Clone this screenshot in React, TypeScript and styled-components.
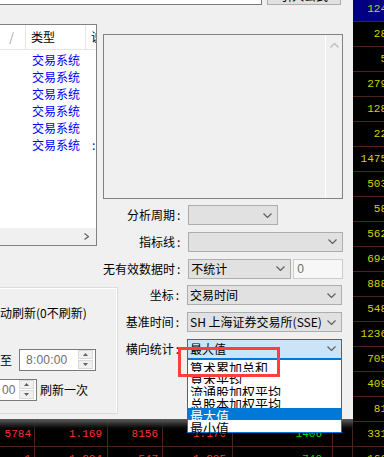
import styled, { createGlobalStyle } from 'styled-components';

const GlobalStyle = createGlobalStyle`
  * { box-sizing: border-box; }
  html, body { margin: 0; padding: 0; background: #000; overflow: hidden; }
  body { width: 384px; height: 457px; font-family: "Noto Sans CJK SC", sans-serif; }
`;

const Screen = styled.div`
  position: relative;
  width: 384px;
  height: 457px;
  overflow: hidden;
  background: #000;
`;

// quote table behind the dialog
const Quotes = styled.div`
  margin-top: -3px;
  width: 388px;
  font-family: "Liberation Mono", monospace;
  font-size: 11px;
`;

const QuoteRow = styled.div<{ $active?: boolean }>`
  display: grid;
  grid-template-columns: 35px 73px 55px 70px 100px 20px 35px;
  height: 25px;
  border-bottom: 1px solid #4a2418;
  background: ${p => (p.$active ? '#000080' : '#000')};
`;

const QuoteCell = styled.div<{ $color: string; $pad: number }>`
  color: ${p => p.$color};
  text-align: right;
  padding-right: ${p => p.$pad}px;
  line-height: 24px;
  border-right: 1px solid #4a2418;
  white-space: nowrap;
  overflow: hidden;
`;

const Dialog = styled.div`
  position: absolute;
  left: 0;
  top: 0;
  width: 353px;
  height: 419px;
  background: #f0f0f0;
  padding-right: 11px;
  display: flex;
  flex-direction: column;
  font-family: "Noto Sans CJK SC", sans-serif;
  font-size: 12px;
  color: #000;

  &::after {
    content: '';
    position: absolute;
    left: 0;
    right: 0;
    top: 100%;
    height: 12px;
    background: linear-gradient(#5c5c5c, rgba(20, 20, 20, 0.6) 70%, rgba(0, 0, 0, 0));
  }
`;

const TopRow = styled.div`
  display: flex;
  gap: 5px;
  margin-top: -18px;
  height: 23px;
  flex-shrink: 0;
`;

const PathField = styled.div`
  width: 262px;
  background: #fff;
  border: 1px solid #7a7a7a;
  border-left: none;
`;

const TopButton = styled.div`
  width: 74px;
  background: #e1e1e1;
  border: 1px solid #adadad;
  text-align: center;
  padding-top: 6px;
  line-height: 14px;
  overflow: hidden;
`;

const SectionA = styled.div`
  display: flex;
  gap: 6px;
  margin-top: 19px;
  align-items: flex-start;
`;

const SectionB = styled.div`
  display: flex;
  margin-top: 6.8px;
  align-items: flex-start;
`;

const ListView = styled.div`
  width: 97px;
  height: 222px;
  flex-shrink: 0;
  border: 1px solid #828282;
  border-left: none;
  background: #fff;
  display: flex;
  flex-direction: column;
  overflow: hidden;
`;

const ListHeader = styled.div`
  display: grid;
  grid-template-columns: 26px 60px 40px;
  height: 25px;
  flex-shrink: 0;
  border-bottom: 1px solid #e5e5e5;
`;

const HeadCell = styled.div<{ $muted?: boolean; $right?: boolean }>`
  line-height: 24px;
  border-right: 1px solid #e5e5e5;
  padding: ${p => (p.$right ? '0 11px 0 0' : '0 0 0 5px')};
  text-align: ${p => (p.$right ? 'right' : 'left')};
  color: ${p => (p.$muted ? '#a0a0a0' : '#000')};
  white-space: nowrap;
  overflow: hidden;
`;

const ListBody = styled.div`
  flex: 1;
  padding-top: 1px;
`;

const ListRow = styled.div`
  display: grid;
  grid-template-columns: 26px 60px 40px;
  height: 17px;
  line-height: 17px;
  color: #0000ff;
  white-space: nowrap;
`;

const ListText = styled.span`
  padding-left: 6px;
  overflow: hidden;
`;

const HScroll = styled.div`
  height: 17px;
  flex-shrink: 0;
  background: #f0f0f0;
  display: flex;
  align-items: center;
  justify-content: flex-end;
  padding-right: 7px;
`;

const RightA = styled.div`
  flex: 1;
  padding-top: 10px;
`;

const Preview = styled.div`
  height: 165px;
  border: 1px solid #828282;
  background: #f0f0f0;
  display: flex;
  justify-content: flex-end;
`;

const VScroll = styled.div`
  width: 17px;
  border-left: 1px solid #fff;
  display: flex;
  justify-content: center;
  padding-top: 8px;
`;

const FormRows = styled.div<{ $top?: number }>`
  display: flex;
  flex-direction: column;
  gap: 6.8px;
  margin-top: ${p => p.$top ?? 0}px;
`;

const FormRow = styled.div`
  display: grid;
  grid-template-columns: 1fr 155px;
  column-gap: 8px;
  height: 20px;
  align-items: center;
`;

const Label = styled.div`
  text-align: right;
  white-space: nowrap;
  line-height: 20px;
`;

const Colon = styled.span`
  margin-left: 2px;
`;

const Controls = styled.div`
  position: relative;
  display: flex;
  gap: 2px;
  height: 20px;
`;

const Combo = styled.div<{ $width?: number; $active?: boolean }>`
  width: ${p => (p.$width ? `${p.$width}px` : '100%')};
  height: 20px;
  border: 1px solid ${p => (p.$active ? '#0078d7' : '#adadad')};
  background: ${p => (p.$active ? '#cce4f7' : '#e1e1e1')};
  display: flex;
  align-items: center;
  justify-content: space-between;
  padding: 0 5px 0 2px;
  line-height: 18px;
  white-space: nowrap;
`;

const SmallInput = styled.div`
  width: 50px;
  height: 20px;
  border: 1px solid #cccccc;
  background: #f7f7f7;
  color: #6d6d6d;
  font-family: "Liberation Sans", sans-serif;
  line-height: 18px;
  padding-left: 3px;
`;

const DropList = styled.div`
  position: absolute;
  left: 0;
  top: 100%;
  width: 155px;
  border: 1px solid #0078d7;
  background: #fff;
  z-index: 2;
`;

const DropItem = styled.div<{ $selected?: boolean }>`
  position: relative;
  height: 12px;
  padding: 2px 0 0 2px;
  font-size: 13px;
  line-height: 12px;
  white-space: nowrap;
  background: ${p => (p.$selected ? '#0078d7' : '#fff')};
  color: ${p => (p.$selected ? '#fff' : '#000')};
`;

const Callout = styled.div`
  position: absolute;
  left: 178px;
  top: 347px;
  width: 102px;
  height: 30px;
  border: 3px solid #ff3e3e;
  z-index: 3;
`;

const GroupBox = styled.div`
  width: 118px;
  height: 127px;
  flex-shrink: 0;
  margin-top: 1.6px;
  border: 1px solid #dcdcdc;
  border-left: none;
  box-shadow: inset 0 1px 0 #fff, inset -1px 0 0 #fff;
  padding-top: 16px;
  display: flex;
  flex-direction: column;
`;

const GroupText = styled.div`
  line-height: 17px;
  white-space: nowrap;
`;

const SpinRow = styled.div<{ $top: number }>`
  display: flex;
  align-items: center;
  gap: 7px;
  margin-top: ${p => p.$top}px;
  white-space: nowrap;
`;

const Spin = styled.div<{ $width: number; $cut?: boolean }>`
  width: ${p => p.$width}px;
  height: 22px;
  border: 1px solid #7a7a7a;
  border-left: ${p => (p.$cut ? 'none' : '1px solid #7a7a7a')};
  background: #fff;
  display: flex;
  align-items: center;
  justify-content: space-between;
  padding: 0 2px 0 ${p => (p.$cut ? 2 : 6)}px;
  margin-right: ${p => (p.$cut ? -4 : 0)}px;
`;

const SpinText = styled.span`
  font-family: "Liberation Sans", sans-serif;
  font-size: 12px;
  color: #6d6d6d;
  letter-spacing: 0.2px;
`;

const SpinButtons = styled.div`
  display: flex;
  flex-direction: column;
  gap: 1px;
  width: 15px;
`;

const SpinBtn = styled.div`
  height: 9px;
  background: #f0f0f0;
  border: 1px solid #dadada;
  display: flex;
  align-items: center;
  justify-content: center;
`;

const RightB = styled.div`
  flex: 1;
`;

const Chevron = ({ dir = 'down', color = '#606060' }: { dir?: 'down' | 'up' | 'right'; color?: string }) => {
  const pts = dir === 'down' ? '0.5,0.5 4.5,4.5 8.5,0.5' : dir === 'up' ? '0.5,4.5 4.5,0.5 8.5,4.5' : '0.5,0.5 4.5,3.5 0.5,6.5';
  const w = dir === 'right' ? 5 : 9;
  const h = dir === 'right' ? 7 : 5;
  return (
    <svg width={w} height={h} viewBox={`0 0 ${w} ${h}`} style={{ display: 'block', flexShrink: 0 }}>
      <polyline points={pts} fill="none" stroke={color} strokeWidth={dir === 'up' ? 1.6 : 1.2} />
    </svg>
  );
};

const Tri = ({ up }: { up?: boolean }) => (
  <svg width="5" height="3" viewBox="0 0 5 3" style={{ display: 'block' }}>
    <polygon points={up ? '2.5,0 5,3 0,3' : '0,0 5,0 2.5,3'} fill="#606060" />
  </svg>
);

const RED = '#ff3232';
const GREEN = '#00dc00';
const YELLOW = '#d2d200';
const PADS = [3, 5, 4, 6, 10, 0, 0];

const sideValues = ['124', '28', '5', '279', '128', '22', '1475', '503', '58', '562', '694', '888', '548', '1236', '705', '409', '81', '331', '166'];
const lowerRows: Record<number, string[]> = {
  17: ['5784', '1.169', '8156', '1.170', '1406', ''],
  18: ['1', '1.204', '547', '1.205', '740', ''],
};

const options = ['算术累加总和', '算术平均', '流通股加权平均', '总股本加权平均', '最大值', '最小值'];

export default function App() {
  return (
    <Screen>
      <GlobalStyle />
      <Quotes>
        {sideValues.map((v, i) => {
          const left = lowerRows[i] ?? ['', '', '', '', '', ''];
          const cells = [...left, v];
          return (
            <QuoteRow key={i} $active={i === 0}>
              {cells.map((c, j) => (
                <QuoteCell key={j} $pad={PADS[j]} $color={j === 6 ? YELLOW : j === 4 ? GREEN : RED}>
                  {c}
                </QuoteCell>
              ))}
            </QuoteRow>
          );
        })}
      </Quotes>

      <Dialog>
        <TopRow>
          <PathField />
          <TopButton>引入公式</TopButton>
        </TopRow>

        <SectionA>
          <ListView>
            <ListHeader>
              <HeadCell $muted $right>/</HeadCell>
              <HeadCell>类型</HeadCell>
              <HeadCell>说明</HeadCell>
            </ListHeader>
            <ListBody>
              {[0, 1, 2, 3, 4, 5].map(i => (
                <ListRow key={i}>
                  <span />
                  <ListText>交易系统</ListText>
                  <ListText>{i === 5 ? ':' : ''}</ListText>
                </ListRow>
              ))}
            </ListBody>
            <HScroll>
              <Chevron dir="right" />
            </HScroll>
          </ListView>

          <RightA>
            <Preview>
              <VScroll>
                <Chevron dir="up" color="#c4c4c4" />
              </VScroll>
            </Preview>
            <FormRows $top={6}>
              <FormRow>
                <Label>分析周期<Colon>:</Colon></Label>
                <Controls>
                  <Combo $width={90}>
                    <span />
                    <Chevron />
                  </Combo>
                </Controls>
              </FormRow>
              <FormRow>
                <Label>指标线<Colon>:</Colon></Label>
                <Controls>
                  <Combo>
                    <span />
                    <Chevron />
                  </Combo>
                </Controls>
              </FormRow>
              <FormRow>
                <Label>无有效数据时<Colon>:</Colon></Label>
                <Controls>
                  <Combo $width={103}>
                    <span>不统计</span>
                    <Chevron />
                  </Combo>
                  <SmallInput>0</SmallInput>
                </Controls>
              </FormRow>
            </FormRows>
          </RightA>
        </SectionA>

        <SectionB>
          <GroupBox>
            <GroupText>动刷新(0不刷新)</GroupText>
            <SpinRow $top={28}>
              <span>至</span>
              <Spin $width={77}>
                <SpinText>8:00:00</SpinText>
                <SpinButtons>
                  <SpinBtn><Tri up /></SpinBtn>
                  <SpinBtn><Tri /></SpinBtn>
                </SpinButtons>
              </Spin>
            </SpinRow>
            <SpinRow $top={8}>
              <Spin $width={37} $cut>
                <SpinText>00</SpinText>
                <SpinButtons>
                  <SpinBtn><Tri up /></SpinBtn>
                  <SpinBtn><Tri /></SpinBtn>
                </SpinButtons>
              </Spin>
              <span>刷新一次</span>
            </SpinRow>
          </GroupBox>

          <RightB>
            <FormRows>
              <FormRow>
                <Label>坐标<Colon>:</Colon></Label>
                <Controls>
                  <Combo>
                    <span>交易时间</span>
                    <Chevron />
                  </Combo>
                </Controls>
              </FormRow>
              <FormRow>
                <Label>基准时间<Colon>:</Colon></Label>
                <Controls>
                  <Combo>
                    <span>SH 上海证券交易所(SSE)</span>
                    <Chevron />
                  </Combo>
                </Controls>
              </FormRow>
              <FormRow>
                <Label>横向统计<Colon>:</Colon></Label>
                <Controls>
                  <Combo $active>
                    <span>最大值</span>
                    <Chevron />
                  </Combo>
                  <DropList>
                    {options.map(o => (
                      <DropItem key={o} $selected={o === '最大值'}>{o}</DropItem>
                    ))}
                  </DropList>
                </Controls>
              </FormRow>
            </FormRows>
          </RightB>
        </SectionB>

        <Callout />
      </Dialog>
    </Screen>
  );
}
